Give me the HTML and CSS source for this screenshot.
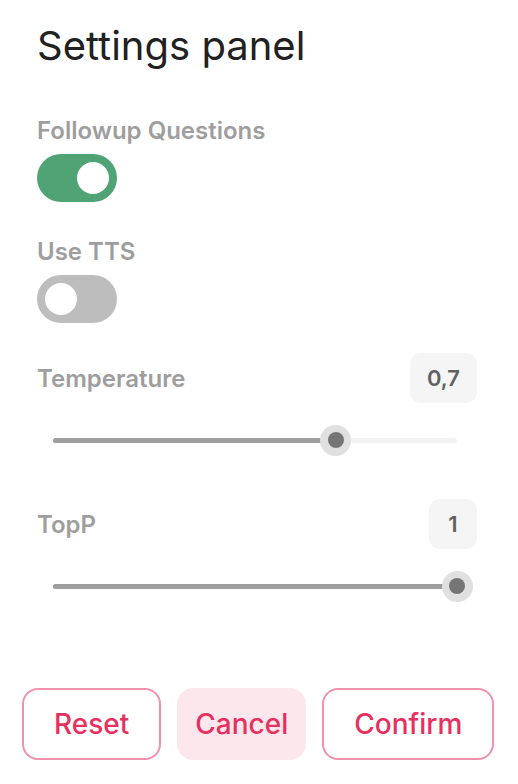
FILE: index.html
```html
<!DOCTYPE html>
<html lang="en">
<head>
<meta charset="utf-8">
<title>Settings panel</title>
<link rel="stylesheet" href="styles.css">
</head>
<body>
<div class="panel">
  <h1 class="title">Settings panel</h1>

  <div class="field">
    <div class="label">Followup Questions</div>
    <div class="toggle on"><span class="knob"></span></div>
  </div>

  <div class="field field-gap">
    <div class="label">Use TTS</div>
    <div class="toggle off"><span class="knob"></span></div>
  </div>

  <div class="range range-first">
    <div class="range-head">
      <div class="label">Temperature</div>
      <div class="value">0,7</div>
    </div>
    <div class="slider">
      <div class="track">
        <div class="fill" style="width:70%"></div>
        <div class="thumb" style="left:70%"><span class="dot"></span></div>
      </div>
    </div>
  </div>

  <div class="range range-second">
    <div class="range-head">
      <div class="label">TopP</div>
      <div class="value">1</div>
    </div>
    <div class="slider">
      <div class="track">
        <div class="fill" style="width:100%"></div>
        <div class="thumb" style="left:100%"><span class="dot"></span></div>
      </div>
    </div>
  </div>

  <div class="actions">
    <button class="btn outlined">Reset</button>
    <button class="btn soft">Cancel</button>
    <button class="btn outlined">Confirm</button>
  </div>
</div>
</body>
</html>
```

FILE: styles.css
```css
* { box-sizing: border-box; }
html, body { margin: 0; padding: 0; background: #ffffff; }
body {
  font-family: Inter, "Noto Sans", "Liberation Sans", sans-serif;
  color: #212121;
}
.panel {
  min-height: 784px;
  display: flex;
  flex-direction: column;
  padding: 22px 41px 24px 37px;
}
.title {
  margin: 0;
  font-size: 40px;
  font-weight: 400;
  line-height: 48px;
  color: #212121;
}
.field { margin-top: 46px; display: flex; flex-direction: column; align-items: flex-start; }
.field-gap { margin-top: 35px; }
.label {
  font-size: 24px;
  font-weight: 600;
  line-height: 29px;
  color: #9e9e9e;
}
.toggle {
  margin-top: 9px;
  width: 80px;
  height: 48px;
  border-radius: 24px;
  padding: 8px;
  display: flex;
  align-items: center;
}
.toggle.on { background: #4fa374; justify-content: flex-end; }
.toggle.off { background: #bdbdbd; justify-content: flex-start; }
.knob { width: 32px; height: 32px; border-radius: 50%; background: #ffffff; }

.range-first { margin-top: 30px; }
.range-second { margin-top: 43px; }
.range-head {
  display: flex;
  justify-content: space-between;
  align-items: center;
}
.value {
  height: 50px;
  min-width: 48px;
  padding: 0 17px;
  border-radius: 11px;
  background: #f5f5f5;
  color: #616161;
  font-size: 22px;
  font-weight: 600;
  display: flex;
  align-items: center;
  justify-content: center;
}
.slider {
  margin-top: 21px;
  height: 32px;
  padding: 0 20px 0 16px;
  display: flex;
  align-items: center;
}
.track {
  position: relative;
  flex: 1;
  height: 5px;
  border-radius: 3px;
  background: #f3f3f3;
}
.fill {
  height: 100%;
  border-radius: 3px;
  background: #9e9e9e;
}
.thumb {
  position: absolute;
  top: 50%;
  width: 31px;
  height: 31px;
  margin: -15.5px 0 0 -15.5px;
  border-radius: 50%;
  background: #e0e0e0;
  display: flex;
  align-items: center;
  justify-content: center;
}
.dot { width: 16px; height: 16px; border-radius: 50%; background: #757575; }

.actions {
  margin-top: auto;
  margin-left: -15px;
  margin-right: -16px;
  display: flex;
  gap: 16px;
}
.btn {
  height: 72px;
  border-radius: 16px;
  font-family: Inter, "Noto Sans", "Liberation Sans", sans-serif;
  font-size: 28px;
  font-weight: 500;
  color: #e6305f;
  display: flex;
  align-items: center;
  justify-content: center;
  cursor: pointer;
}
.btn.outlined {
  background: #ffffff;
  border: 2px solid #f291ad;
  padding: 0 30px;
}
.btn.soft {
  background: #fce8ec;
  border: none;
  padding: 0 18px;
}
```
